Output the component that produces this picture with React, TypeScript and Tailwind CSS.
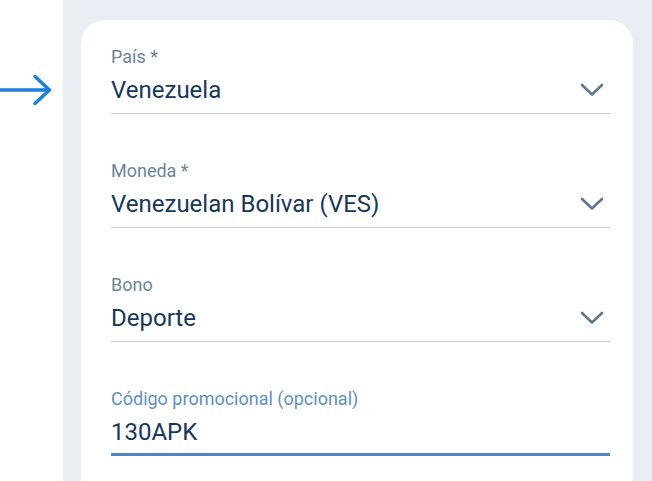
import React from "react";

type Field = {
  label: string;
  value: string;
  select?: boolean;
  focused?: boolean;
};

const fields: Field[] = [
  { label: "País *", value: "Venezuela", select: true },
  { label: "Moneda *", value: "Venezuelan Bolívar (VES)", select: true },
  { label: "Bono", value: "Deporte", select: true },
  { label: "Código promocional (opcional)", value: "130APK", focused: true },
];

function Chevron() {
  return (
    <svg width="24" height="14" viewBox="0 0 24 14" fill="none" className="mr-[6px]">
      <path d="M2 2L12 11.5L22 2" stroke="#5b7893" strokeWidth="2.6" strokeLinecap="round" strokeLinejoin="round" />
    </svg>
  );
}

function FormField({ field, first }: { field: Field; first: boolean }) {
  return (
    <div className={first ? "" : "mt-[46px]"}>
      <div
        className={
          "text-[18px] leading-[22px] " +
          (field.focused ? "text-[#5b8fc5]" : "text-[#6d8599]")
        }
      >
        {field.label}
      </div>
      <div
        className={
          "mt-[8px] flex items-center justify-between " +
          (field.focused
            ? "pb-[7px] border-b-[3.5px] border-[#4f86bf]"
            : "pb-[9px] border-b-[1.5px] border-[#c5d1d9]")
        }
      >
        <span className="text-[24px] leading-[28px] text-[#16375c]">{field.value}</span>
        {field.select && <Chevron />}
      </div>
    </div>
  );
}

export default function App() {
  return (
    <div className="flex h-[481px] w-full bg-white overflow-hidden" style={{ fontFamily: "Roboto, 'Noto Sans', sans-serif" }}>
      <div className="w-[63px] shrink-0 pt-[75px]">
        <svg width="54" height="32" viewBox="0 0 54 32" fill="none">
          <path d="M0 15H49" stroke="#1b7fe0" strokeWidth="3.4" strokeLinecap="round" />
          <path d="M35 1.5L49.5 15L35 28.5" stroke="#1b7fe0" strokeWidth="3.4" strokeLinecap="round" strokeLinejoin="round" />
        </svg>
      </div>
      <div className="flex-1 bg-[#e9edf4] pt-[20px] pl-[18px] pr-[19px] flex">
        <div className="flex-1 bg-white rounded-t-[24px] pt-[26px] pl-[30px] pr-[23px]">
          {fields.map((f, i) => (
            <FormField key={f.label} field={f} first={i === 0} />
          ))}
        </div>
      </div>
    </div>
  );
}
